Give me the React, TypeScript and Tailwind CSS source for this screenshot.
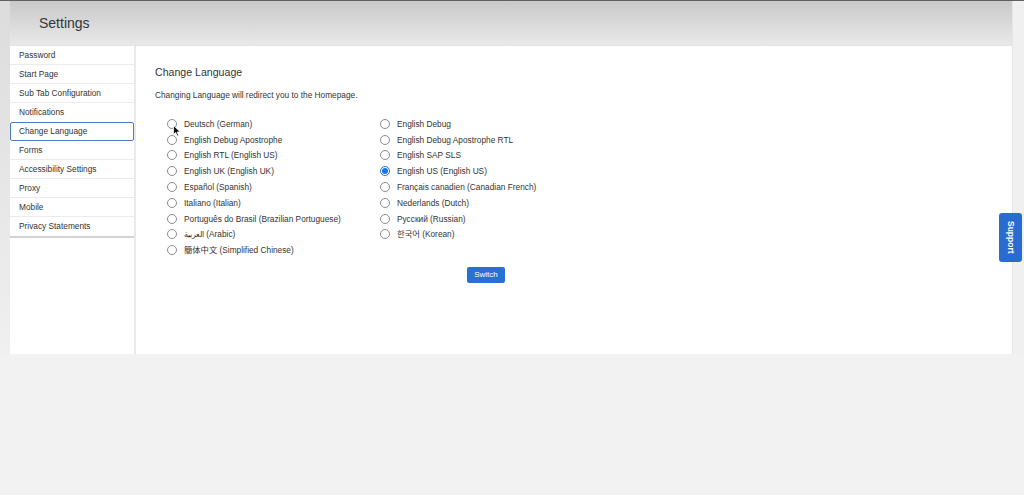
import React from "react";

const sideItems = [
  "Password",
  "Start Page",
  "Sub Tab Configuration",
  "Notifications",
  "Change Language",
  "Forms",
  "Accessibility Settings",
  "Proxy",
  "Mobile",
  "Privacy Statements",
];

const col1 = [
  "Deutsch (German)",
  "English Debug Apostrophe",
  "English RTL (English US)",
  "English UK (English UK)",
  "Español (Spanish)",
  "Italiano (Italian)",
  "Português do Brasil (Brazilian Portuguese)",
  "العربية (Arabic)",
  "簡体中文 (Simplified Chinese)",
];

const col2 = [
  "English Debug",
  "English Debug Apostrophe RTL",
  "English SAP SLS",
  "English US (English US)",
  "Français canadien (Canadian French)",
  "Nederlands (Dutch)",
  "Русский (Russian)",
  "한국어 (Korean)",
];

function Radio({ label, checked }: { label: string; checked?: boolean }) {
  return (
    <div className="flex items-center h-[15.8px]">
      {checked ? (
        <span className="w-[10px] h-[10px] rounded-full border border-[#1a73e8] flex items-center justify-center bg-white shrink-0">
          <span className="w-[6px] h-[6px] rounded-full bg-[#1a73e8]" />
        </span>
      ) : (
        <span className="w-[10px] h-[10px] rounded-full border border-[#8c8c8c] bg-white shrink-0" />
      )}
      <span className="ml-[7px] text-[8.3px] leading-none text-[#333] whitespace-nowrap">{label}</span>
    </div>
  );
}

export default function App() {
  return (
    <div
      className="relative w-full h-[495px] bg-[#f2f2f2] border-t border-[#5d6166] overflow-hidden"
      style={{ fontFamily: '"Liberation Sans", Arial, "Noto Sans CJK KR", "Noto Sans CJK SC", sans-serif' }}
    >
      <div className="flex">
        <div className="w-[10px] h-[354px] bg-gradient-to-b from-[#dcdcdc] to-[#f0f0f0]" />
        <div className="w-[1002px] flex flex-col">
          <div className="h-[45px] bg-gradient-to-b from-[#c9c9c9] to-[#e9e9e9] border-b border-[#e4e4e4] flex items-center pl-[29px]">
            <span className="text-[14px] text-[#32363a]">Settings</span>
          </div>
          <div className="h-[308px] bg-white flex">
            <div className="w-[126px] border-r-2 border-[#e9e9e9] shrink-0">
              <div className="border-b-2 border-[#d2d2d2]">
                {sideItems.map((it, i) => (
                  <div
                    key={it}
                    className={
                      it === "Change Language"
                        ? "h-[19px] flex items-center pl-[8px] border border-[#4a7bd0] rounded-[2px] text-[8.3px] text-[#333]"
                        : "h-[19px] flex items-center pl-[9px] text-[8.3px] text-[#333] " +
                          (i < sideItems.length - 1 && sideItems[i + 1] !== "Change Language" ? "border-b border-[#ebebeb]" : "")
                    }
                  >
                    {it}
                  </div>
                ))}
              </div>
            </div>
            <div className="flex-1 pl-[19px] pt-[19px]">
              <div className="text-[10.6px] leading-[14px] text-[#32363a]">Change Language</div>
              <div className="mt-[10px] text-[8.3px] leading-[12px] text-[#333]">
                Changing Language will redirect you to the Homepage.
              </div>
              <div className="mt-[15px] ml-[12px] flex">
                <div className="w-[213px] flex flex-col">
                  {col1.map((l) => (
                    <Radio key={l} label={l} />
                  ))}
                </div>
                <div className="flex flex-col">
                  {col2.map((l) => (
                    <Radio key={l} label={l} checked={l === "English US (English US)"} />
                  ))}
                </div>
              </div>
              <button className="mt-[9px] ml-[312px] w-[38px] h-[16px] bg-[#2a6fd6] rounded-[2px] text-white text-[8px] flex items-center justify-center">
                Switch
              </button>
            </div>
          </div>
        </div>
        <div className="w-[12px] h-[354px] bg-[#f0f0f0] border-l border-[#e6e6e6]" />
      </div>

      <div className="absolute left-[999px] top-[212px] w-[23px] h-[49px] bg-[#2a6bd1] rounded-[3px] flex items-center justify-center">
        <span className="text-white text-[8.5px] font-bold [writing-mode:vertical-rl]">Support</span>
      </div>

      <svg className="absolute left-[173px] top-[124px]" width="8" height="12" viewBox="0 0 8 12">
        <path d="M0.5 0.5 L0.5 9.5 L2.7 7.5 L4.2 11 L5.6 10.4 L4.2 7 L7.3 7 Z" fill="#111" stroke="#fff" strokeWidth="0.8" />
      </svg>
    </div>
  );
}
